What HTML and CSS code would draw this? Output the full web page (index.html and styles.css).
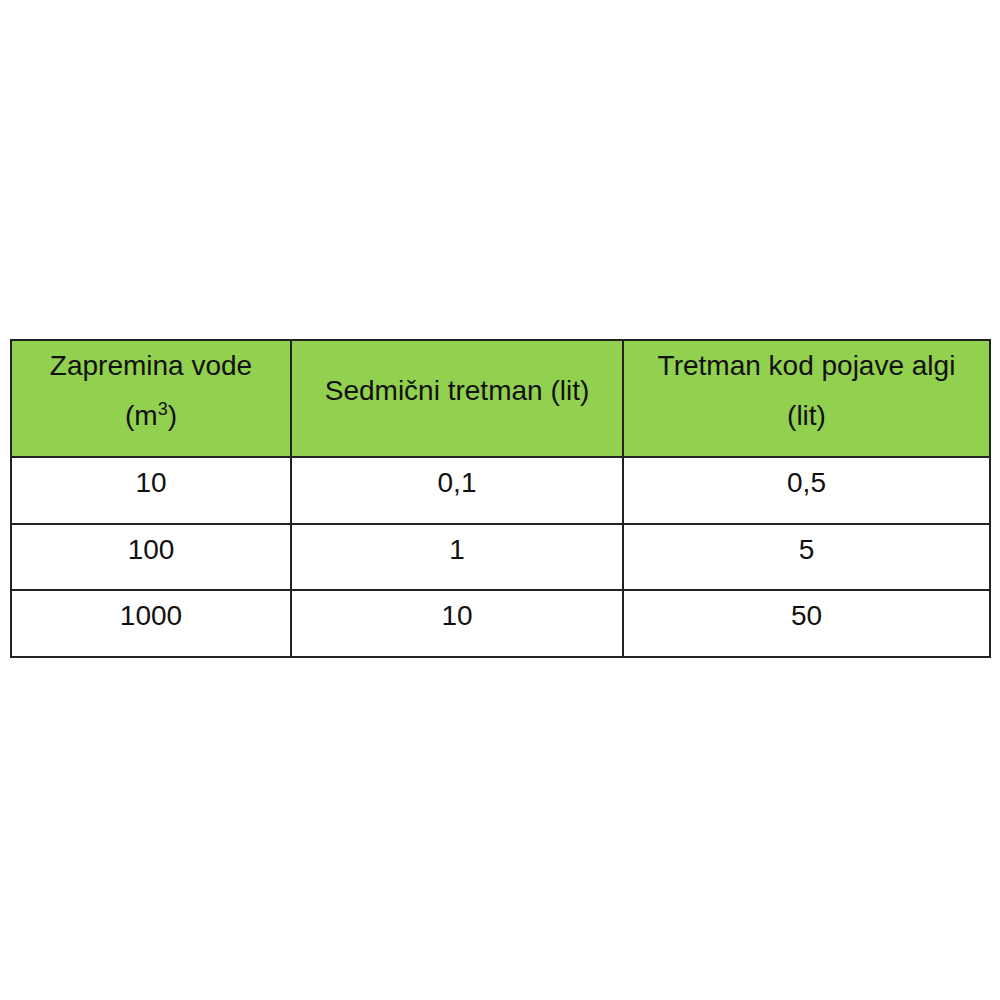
FILE: index.html
```html
<!DOCTYPE html>
<html lang="sr">
<head>
<meta charset="utf-8">
<title>Tabela doziranja</title>
<link rel="stylesheet" href="styles.css">
</head>
<body>
<main class="page">
  <table class="dose-table">
    <colgroup>
      <col class="c1">
      <col class="c2">
      <col class="c3">
    </colgroup>
    <thead>
      <tr>
        <th>Zapremina vode<br>(m<sup>3</sup>)</th>
        <th>Sedmični tretman (lit)</th>
        <th>Tretman kod pojave algi<br>(lit)</th>
      </tr>
    </thead>
    <tbody>
      <tr><td>10</td><td>0,1</td><td>0,5</td></tr>
      <tr><td>100</td><td>1</td><td>5</td></tr>
      <tr><td>1000</td><td>10</td><td>50</td></tr>
    </tbody>
  </table>
</main>
</body>
</html>
```
FILE: styles.css
```css
html, body {
  margin: 0;
  background: #ffffff;
}
.page {
  padding: 339px 11px 0 10px;
  font-family: "Liberation Sans", Arial, sans-serif;
}
.dose-table {
  width: 979px;
  border-collapse: collapse;
  table-layout: fixed;
  color: #111111;
  font-size: 28px;
  line-height: 50px;
}
.c1 { width: 280px; }
.c2 { width: 332px; }
.c3 { width: 367px; }
.dose-table th,
.dose-table td {
  border: 2px solid #222222;
  padding: 0 4px 14.5px;
  text-align: center;
  vertical-align: middle;
  font-weight: normal;
}
.dose-table th {
  background: #92d050;
  padding-bottom: 15px;
}
.dose-table sup {
  font-size: 18px;
  line-height: 0;
  vertical-align: 10px;
}
```
